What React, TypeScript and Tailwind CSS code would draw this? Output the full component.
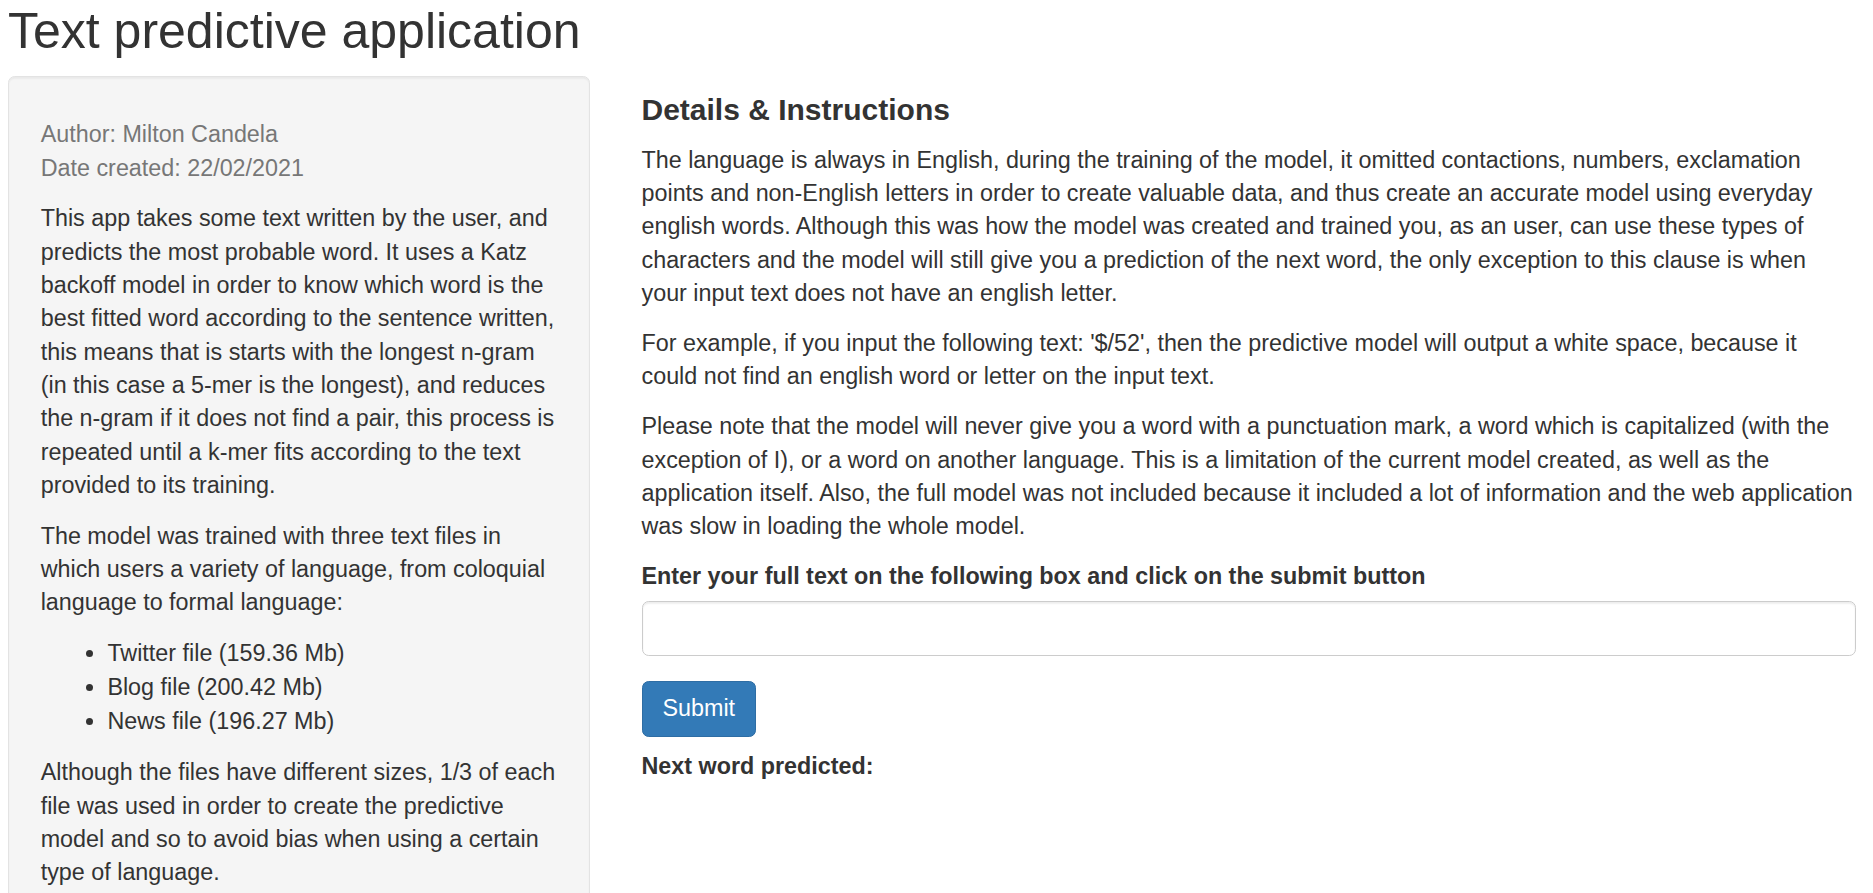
import React from "react"

const bullets = ["Twitter file (159.36 Mb)", "Blog file (200.42 Mb)", "News file (196.27 Mb)"]

export default function App() {
  return (
    <div className="min-h-screen bg-white text-[#333333] font-['Liberation_Sans',Arial,sans-serif] text-[23.33px] leading-[33.33px] pl-[8px] pr-[17px] pt-[4px]">
      {/* title */}
      <h2 className="text-[50px] leading-[55px] font-normal mb-[16.7px]">Text predictive application</h2>

      <div className="flex items-start">
        {/* sidebar */}
        <div className="w-[582px] shrink-0 bg-[#f5f5f5] border-[1.67px] border-[#e3e3e3] rounded-[6.7px] shadow-[inset_0_1.67px_1.67px_rgba(0,0,0,0.05)] px-[31.7px] pt-[41.5px] pb-[31.7px]">
          <p className="text-[#777777] mb-[17.5px]">
            Author: Milton Candela
            <br />
            Date created: 22/02/2021
          </p>
          <p className="mb-[17.5px]">
            This app takes some text written by the user, and predicts the most probable word. It uses a Katz backoff
            model in order to know which word is the best fitted word according to the sentence written, this means that
            is starts with the longest n-gram (in this case a 5-mer is the longest), and reduces the n-gram if it does
            not find a pair, this process is repeated until a k-mer fits according to the text provided to its training.
          </p>
          <p className="mb-[17.5px]">
            The model was trained with three text files in which users a variety of language, from coloquial language to
            formal language:
          </p>
          <ul className="list-disc pl-[66.7px] mb-[17.5px] leading-[33.8px]">
            {bullets.map((b) => (
              <li key={b}>{b}</li>
            ))}
          </ul>
          <p className="mb-[17.5px]">
            Although the files have different sizes, 1/3 of each file was used in order to create the predictive model
            and so to avoid bias when using a certain type of language.
          </p>
        </div>

        {/* main panel */}
        <div className="flex-1 ml-[51.5px]">
          <h4 className="text-[30px] leading-[33px] font-bold mt-[17.5px] mb-[17.5px]">Details &amp; Instructions</h4>
          <p className="mb-[16.7px]">
            The language is always in English, during the training of the model, it omitted contactions, numbers,
            exclamation points and non-English letters in order to create valuable data, and thus create an accurate
            model using everyday english words. Although this was how the model was created and trained you, as an user,
            can use these types of characters and the model will still give you a prediction of the next word, the only
            exception to this clause is when your input text does not have an english letter.
          </p>
          <p className="mb-[16.7px]">
            For example, if you input the following text: '$/52', then the predictive model will output a white space,
            because it could not find an english word or letter on the input text.
          </p>
          <p className="mb-[16.7px]">
            Please note that the model will never give you a word with a punctuation mark, a word which is capitalized
            (with the exception of I), or a word on another language. This is a limitation of the current model created,
            as well as the application itself. Also, the full model was not included because it included a lot of
            information and the web application was slow in loading the whole model.
          </p>

          <div className="mb-[25px]">
            <label className="inline-block font-bold mb-[7.5px]">
              Enter your full text on the following box and click on the submit button
            </label>
            <input
              type="text"
              className="block w-full h-[55px] border-[1.67px] border-[#cccccc] rounded-[6.7px] bg-white px-[20px] shadow-[inset_0_1.67px_1.67px_rgba(0,0,0,0.075)] outline-none"
            />
          </div>

          <button className="bg-[#337ab7] border-[1.67px] border-[#2e6da4] text-white rounded-[6.7px] px-[20px] py-[10px] leading-[33.33px]">
            Submit
          </button>

          <h5 className="font-bold text-[23.33px] leading-[25.7px] mt-[17.5px]">Next word predicted:</h5>
        </div>
      </div>
    </div>
  )
}
